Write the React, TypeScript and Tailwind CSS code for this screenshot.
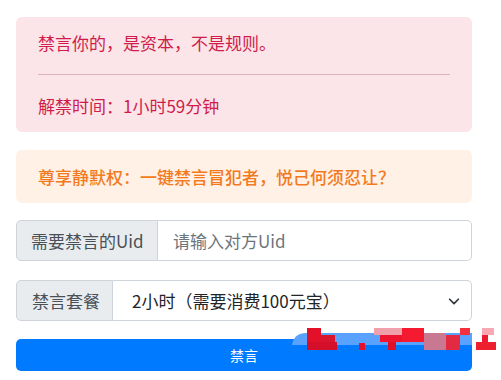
import React from 'react';

const font = { fontFamily: '"Noto Sans CJK SC", "Noto Sans", sans-serif' };

// the mosaic blur lying over the button's right half
const Mosaic: React.FC = () => (
  <svg className="pointer-events-none absolute left-[290px] top-[326px]" width="211" height="26" viewBox="0 0 211 26">
    <path d="M2 19 Q4 7 16 7 H182 V19 Z" fill="#5aa2ff" />
    <rect x="17" y="2" width="14" height="14" fill="#e3102a" />
    <rect x="31" y="9" width="14" height="7" fill="#d8142e" />
    <rect x="17" y="16" width="30" height="8" fill="#d40f2a" />
    <rect x="69" y="17" width="6" height="7" fill="#e6102a" />
    <rect x="84" y="2" width="28" height="7" fill="#f0a0aa" />
    <rect x="90" y="9" width="22" height="7" fill="#ee1530" />
    <rect x="98" y="16" width="8" height="8" fill="#e01028" />
    <rect x="112" y="2" width="22" height="14" fill="#f41a30" />
    <rect x="134" y="7" width="22" height="17" fill="#c87890" />
    <rect x="156" y="9" width="14" height="15" fill="#e42a40" />
    <rect x="170" y="2" width="10" height="7" fill="#f23040" />
    <rect x="192" y="2" width="12" height="7" fill="#f7a8b0" />
    <rect x="192" y="9" width="6" height="7" fill="#f01a30" />
    <rect x="186" y="16" width="20" height="8" fill="#ee2030" />
  </svg>
);

export default function App() {
  return (
    <div className="relative h-[380px] w-[501px] overflow-hidden bg-white" style={font}>
      <div className="flex w-[472px] flex-col pl-[16px] pt-[17px]">
        <div className="rounded-[6px] bg-[#fbe5e8] px-[22px] py-[14px] text-[17px] leading-[24px] text-[#d01c4b]">
          <div>禁言你的，是资本，不是规则。</div>
          <div className="my-[19px] h-px bg-[#dfb3ba]" />
          <div>解禁时间：1小时59分钟</div>
        </div>

        <div className="mt-[18px] rounded-[6px] bg-[#fff1e6] px-[22px] py-[14px] text-[17px] font-medium leading-[25px] text-[#f27a1d]">
          尊享静默权：一键禁言冒犯者，悦己何须忍让？
        </div>

        <div className="mt-[17px] flex h-[41px] text-[17px]">
          <div className="flex w-[142px] items-center rounded-l-[5px] border border-[#ced4da] bg-[#e9ecef] pl-[14px] text-[#495057]">
            需要禁言的Uid
          </div>
          <input
            className="min-w-0 flex-1 rounded-r-[5px] border border-l-0 border-[#ced4da] px-[15px] text-[#495057] outline-none placeholder:text-[#6c757d]"
            placeholder="请输入对方Uid"
            style={font}
          />
        </div>

        <div className="mt-[19px] flex h-[41px] text-[17px]">
          <div className="flex w-[97px] items-center rounded-l-[5px] border border-[#ced4da] bg-[#e9ecef] pl-[15px] text-[#495057]">
            禁言套餐
          </div>
          <div className="flex flex-1 items-center justify-between rounded-r-[5px] border border-l-0 border-[#ced4da] pl-[19px] pr-[10px] text-[#212529]">
            <span>2小时（需要消费100元宝）</span>
            <svg width="14" height="14" viewBox="0 0 16 16" fill="none" stroke="#343a40" strokeWidth="2" strokeLinecap="round" strokeLinejoin="round">
              <path d="M3 6l5 5 5-5" />
            </svg>
          </div>
        </div>

        <button className="mt-[18px] flex h-[32px] items-center justify-center rounded-[5px] bg-[#007bff] text-[14px] text-white" style={font}>
          禁言
        </button>
      </div>
      <Mosaic />
    </div>
  );
}
